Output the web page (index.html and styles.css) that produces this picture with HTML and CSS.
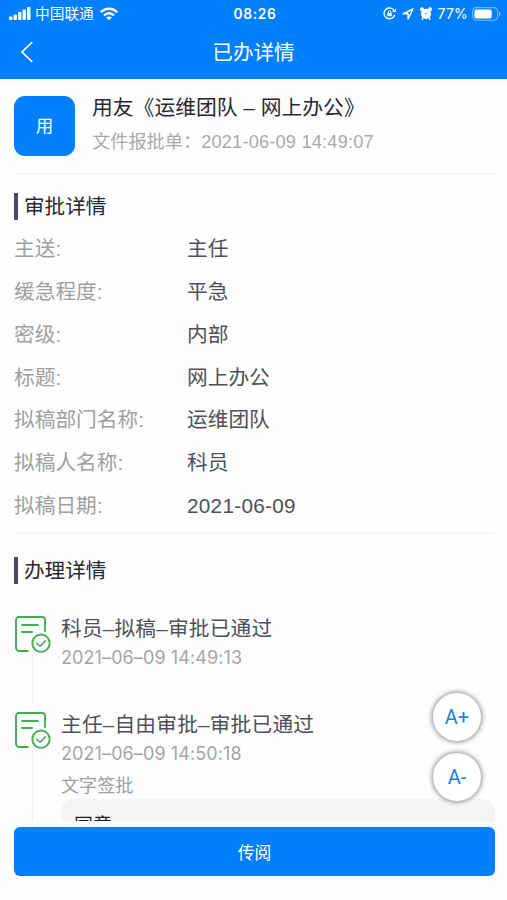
FILE: index.html
```
<!DOCTYPE html>
<html lang="zh-CN">

<head>
	<meta charset="utf-8">
	<title>已办详情</title>
	<link rel="stylesheet" href="styles.css">
</head>

<body>
	<header>
		<div class="status-bar">
			<div class="status-left">
				<svg class="signal" width="22" height="14" viewBox="0 0 22 14" fill="#fff">
					<rect x="0" y="9.5" width="3.4" height="3.5" rx="1" />
					<rect x="4.5" y="7.5" width="3.4" height="5.5" rx="1" />
					<rect x="9" y="5" width="3.4" height="8" rx="1" />
					<rect x="13.5" y="2.5" width="3.4" height="10.5" rx="1" />
					<rect x="18" y="0" width="3.4" height="13" rx="1" />
				</svg>
				<span class="carrier">中国联通</span>
				<svg class="wifi" width="18" height="14" viewBox="0 0 18 14" fill="none" stroke="#fff" stroke-width="2.5">
					<path d="M0.9 5.2C5.3.5 12.7.5 17.1 5.2" />
					<path d="M4 8.5c2.8-2.9 7.2-2.9 10 0" />
					<path d="M9 13.2 6.2 10.6c1.5-1.4 4.1-1.4 5.6 0z" fill="#fff" stroke="none" />
				</svg>
			</div>
			<div class="time">08:26</div>
			<div class="status-right">
				<svg width="13" height="13" viewBox="0 0 13 13" fill="none" stroke="#fff" stroke-width="1.4">
					<path d="M11.4 4.2A5.4 5.4 0 1 0 11.6 8" />
					<path d="M9.6 4.6h3V1.8" stroke-width="1" />
					<path d="M5.2 6V5a1.3 1.3 0 0 1 2.6 0v1" stroke-width="1" />
					<rect x="4.3" y="6" width="4.4" height="3.2" fill="#fff" stroke="none" />
				</svg>
				<svg width="12" height="12" viewBox="0 0 12 12" fill="none" stroke="#fff" stroke-width="1.4" stroke-linejoin="round">
					<path d="M11 1 1 5.8h5.1V11z" />
				</svg>
				<svg width="12" height="13" viewBox="0 0 12 13" fill="#fff">
					<circle cx="6" cy="6.8" r="5.1" />
					<circle cx="2" cy="2.3" r="2" />
					<circle cx="10" cy="2.3" r="2" />
					<path d="m2 12.7 1-2.2M10 12.7 9 10.5" stroke="#fff" stroke-width="1.5" />
					<path d="m8 4.3-2 3-1.6-.8" fill="none" stroke="#66b2ff" stroke-width=".9" />
				</svg>
				<span class="percent">77%</span>
				<svg class="battery" width="29" height="14" viewBox="0 0 29 14">
					<rect x=".6" y=".6" width="25" height="12.6" rx="3.6" fill="none" stroke="#75bbff" stroke-width="1.1" />
					<rect x="2.4" y="2.4" width="17.3" height="9" rx="2" fill="#fff" />
					<path d="M27 4.5c2 .7 2 4 0 4.8z" fill="#75bbff" />
				</svg>
			</div>
		</div>
		<div class="nav">
			<svg class="back" width="14" height="22" viewBox="0 0 14 22" fill="none" stroke="#fff" stroke-width="1.7">
				<path d="M12.3 1.2 2 11l10.3 9.8" />
			</svg>
			<h1>已办详情</h1>
		</div>
	</header>

	<main>
		<div class="summary">
			<div class="avatar">用</div>
			<div>
				<div class="doc-title">用友《运维团队 – 网上办公》</div>
				<div class="doc-sub">文件报批单：<span>2021-06-09 14:49:07</span></div>
			</div>
		</div>

		<section class="approval">
			<h2>审批详情</h2>
			<dl>
				<dt>主送:</dt><dd>主任</dd>
				<dt>缓急程度:</dt><dd>平急</dd>
				<dt>密级:</dt><dd>内部</dd>
				<dt>标题:</dt><dd>网上办公</dd>
				<dt>拟稿部门名称:</dt><dd>运维团队</dd>
				<dt>拟稿人名称:</dt><dd>科员</dd>
				<dt>拟稿日期:</dt><dd class="date">2021-06-09</dd>
			</dl>
		</section>

		<section class="process">
			<h2>办理详情</h2>
			<div class="step">
				<div class="rail">
					<svg width="37" height="38" viewBox="0 0 37 38" fill="none" stroke="#43ad53" stroke-width="1.9" stroke-linecap="round">
						<path d="M14 35H5a3 3 0 0 1-3-3V4a3 3 0 0 1 3-3h23a3 3 0 0 1 3 3v11" />
						<path d="M8 9h16M8 16h10" />
						<circle cx="27" cy="27.2" r="8.7" />
						<path d="m22.7 27.2 3.4 3 5.2-5.3" stroke-width="1.5" />
					</svg>
					<div class="line"></div>
				</div>
				<div class="step-body">
					<div class="step-title">科员–拟稿–审批已通过</div>
					<div class="step-time">2021–06–09 14:49:13</div>
				</div>
			</div>
			<div class="step">
				<div class="rail">
					<svg width="37" height="38" viewBox="0 0 37 38" fill="none" stroke="#43ad53" stroke-width="1.9" stroke-linecap="round">
						<path d="M14 35H5a3 3 0 0 1-3-3V4a3 3 0 0 1 3-3h23a3 3 0 0 1 3 3v11" />
						<path d="M8 9h16M8 16h10" />
						<circle cx="27" cy="27.2" r="8.7" />
						<path d="m22.7 27.2 3.4 3 5.2-5.3" stroke-width="1.5" />
					</svg>
					<div class="line"></div>
				</div>
				<div class="step-body">
					<div class="step-title">主任–自由审批–审批已通过</div>
					<div class="step-time">2021–06–09 14:50:18</div>
					<div class="step-type">文字签批</div>
					<div class="comment">同意</div>
				</div>
			</div>
		</section>
	</main>

	<footer>
		<button class="submit">传阅</button>
	</footer>

	<div class="font-size">
		<button>A+</button>
		<button>A-</button>
	</div>
</body>

</html>
```
FILE: styles.css
```
* {
	box-sizing: border-box;
}

body {
	margin: 0;
	height: 900px;
	display: flex;
	flex-direction: column;
	overflow: hidden;
	background-color: #fefefe;
	font-family: "Liberation Sans", "Noto Sans CJK SC", sans-serif;
	font-weight: 400;
	color: #303040;
}

h1, h2, dl, dd {
	margin: 0;
	font-weight: 400;
}

button {
	font-family: inherit;
	font-weight: inherit;
	border: 0;
	padding: 0;
}

header {
	height: 79px;
	flex: none;
	background-color: #0080ff;
	color: #fff;
}

.status-bar {
	display: grid;
	grid-template-columns: 1fr auto 1fr;
	align-items: center;
	height: 27px;
	padding: 0 6px 0 9px;
}

.status-left, .status-right {
	display: flex;
	align-items: center;
}

.carrier {
	margin-left: 4px;
	font-size: 14.7px;
	line-height: 20px;
}

.wifi {
	margin-left: 6px;
}

.time {
	font-family: Inter, sans-serif;
	font-size: 13.8px;
	font-weight: 600;
	letter-spacing: 0.6px;
}

.status-right {
	justify-content: flex-end;
	gap: 6px;
}

.percent {
	font-family: Inter, sans-serif;
	font-size: 14px;
	font-weight: 400;
	letter-spacing: 0.2px;
}

.battery {
	margin-left: -2px;
}

.nav {
	display: grid;
	grid-template-columns: 1fr auto 1fr;
	align-items: center;
	height: 50px;
	padding: 0 20px;
}

.nav h1 {
	padding-top: 1px;
	font-size: 20.6px;
	line-height: 30px;
}

main {
	height: 742px;
	flex: none;
	overflow: hidden;
	padding: 0 12px 0 14px;
}

.summary {
	display: flex;
	height: 96px;
	padding-top: 17px;
	border-bottom: 2px solid #f5f5f5;
}

.avatar {
	width: 61px;
	height: 60px;
	margin-right: 17px;
	border-radius: 11px;
	background-color: #0080ff;
	color: #fff;
	font-size: 17.5px;
	line-height: 60px;
	text-align: center;
}

.doc-title {
	margin-top: -4px;
	font-size: 20.8px;
	line-height: 32px;
	white-space: nowrap;
	color: #282834;
}

.doc-sub {
	margin-top: 4px;
	font-size: 18.2px;
	line-height: 28px;
	color: #aaa;
}

.doc-sub span {
	letter-spacing: 0.2px;
}

h2 {
	height: 27px;
	padding-left: 6px;
	border-left: 4px solid #4b4960;
	font-size: 20.6px;
	line-height: 27px;
	color: #282834;
}

.approval {
	height: 359px;
	padding-top: 18px;
	border-bottom: 2px solid #f6f6f6;
}

dl {
	display: grid;
	grid-template-columns: 173px 1fr;
	grid-auto-rows: 42.75px;
	align-items: center;
	margin-top: 8px;
	font-size: 20.7px;
	line-height: 30px;
}

dt {
	color: #a0a0a0;
}

dd {
	color: #50505a;
}

.date {
	letter-spacing: 0.3px;
}

.process {
	padding-top: 23px;
}

.step {
	display: flex;
	height: 96px;
}

.process h2 + .step {
	margin-top: 32px;
}

.step:last-child {
	height: 200px;
}

.rail {
	width: 37px;
	margin-right: 10px;
	display: flex;
	flex-direction: column;
}

.rail svg {
	flex: none;
}

.line {
	flex: 1;
	width: 1px;
	margin: 0 0 8px 18px;
	background-color: #f0f0f0;
}

.step-body {
	flex: 1;
}

.step-title {
	margin-top: -3px;
	font-size: 20.7px;
	line-height: 32px;
	letter-spacing: 0.2px;
	color: #50505a;
}

.step-time {
	font-family: Inter, sans-serif;
	font-size: 18px;
	font-weight: 400;
	line-height: 25px;
	letter-spacing: 0.1px;
	color: #a5a5a5;
}

.step-type {
	margin-top: 6px;
	font-size: 18.1px;
	line-height: 28px;
	color: #a0a0a0;
}

.comment {
	height: 60px;
	margin-top: -1px;
	padding: 12px 13px;
	border-radius: 13px;
	background-color: #f5f5f5;
	font-size: 19px;
	line-height: 30px;
	font-weight: 400;
	color: #222;
}

footer {
	padding: 6px 12px 0 14px;
}

.submit {
	width: 100%;
	height: 49px;
	border-radius: 6px;
	background-color: #0080ff;
	font-size: 16.8px;
	color: #fff;
}

/* floating font size buttons */
.font-size {
	position: absolute;
	right: 26px;
	top: 693px;
	display: flex;
	flex-direction: column;
	gap: 12px;
}

.font-size button {
	width: 48px;
	height: 48px;
	border-radius: 50%;
	background-color: #fff;
	box-shadow: 0 0 5px 1px #888;
	font-family: Roboto, sans-serif;
	font-size: 20px;
	font-weight: 400;
	color: #2380d0;
}
```
